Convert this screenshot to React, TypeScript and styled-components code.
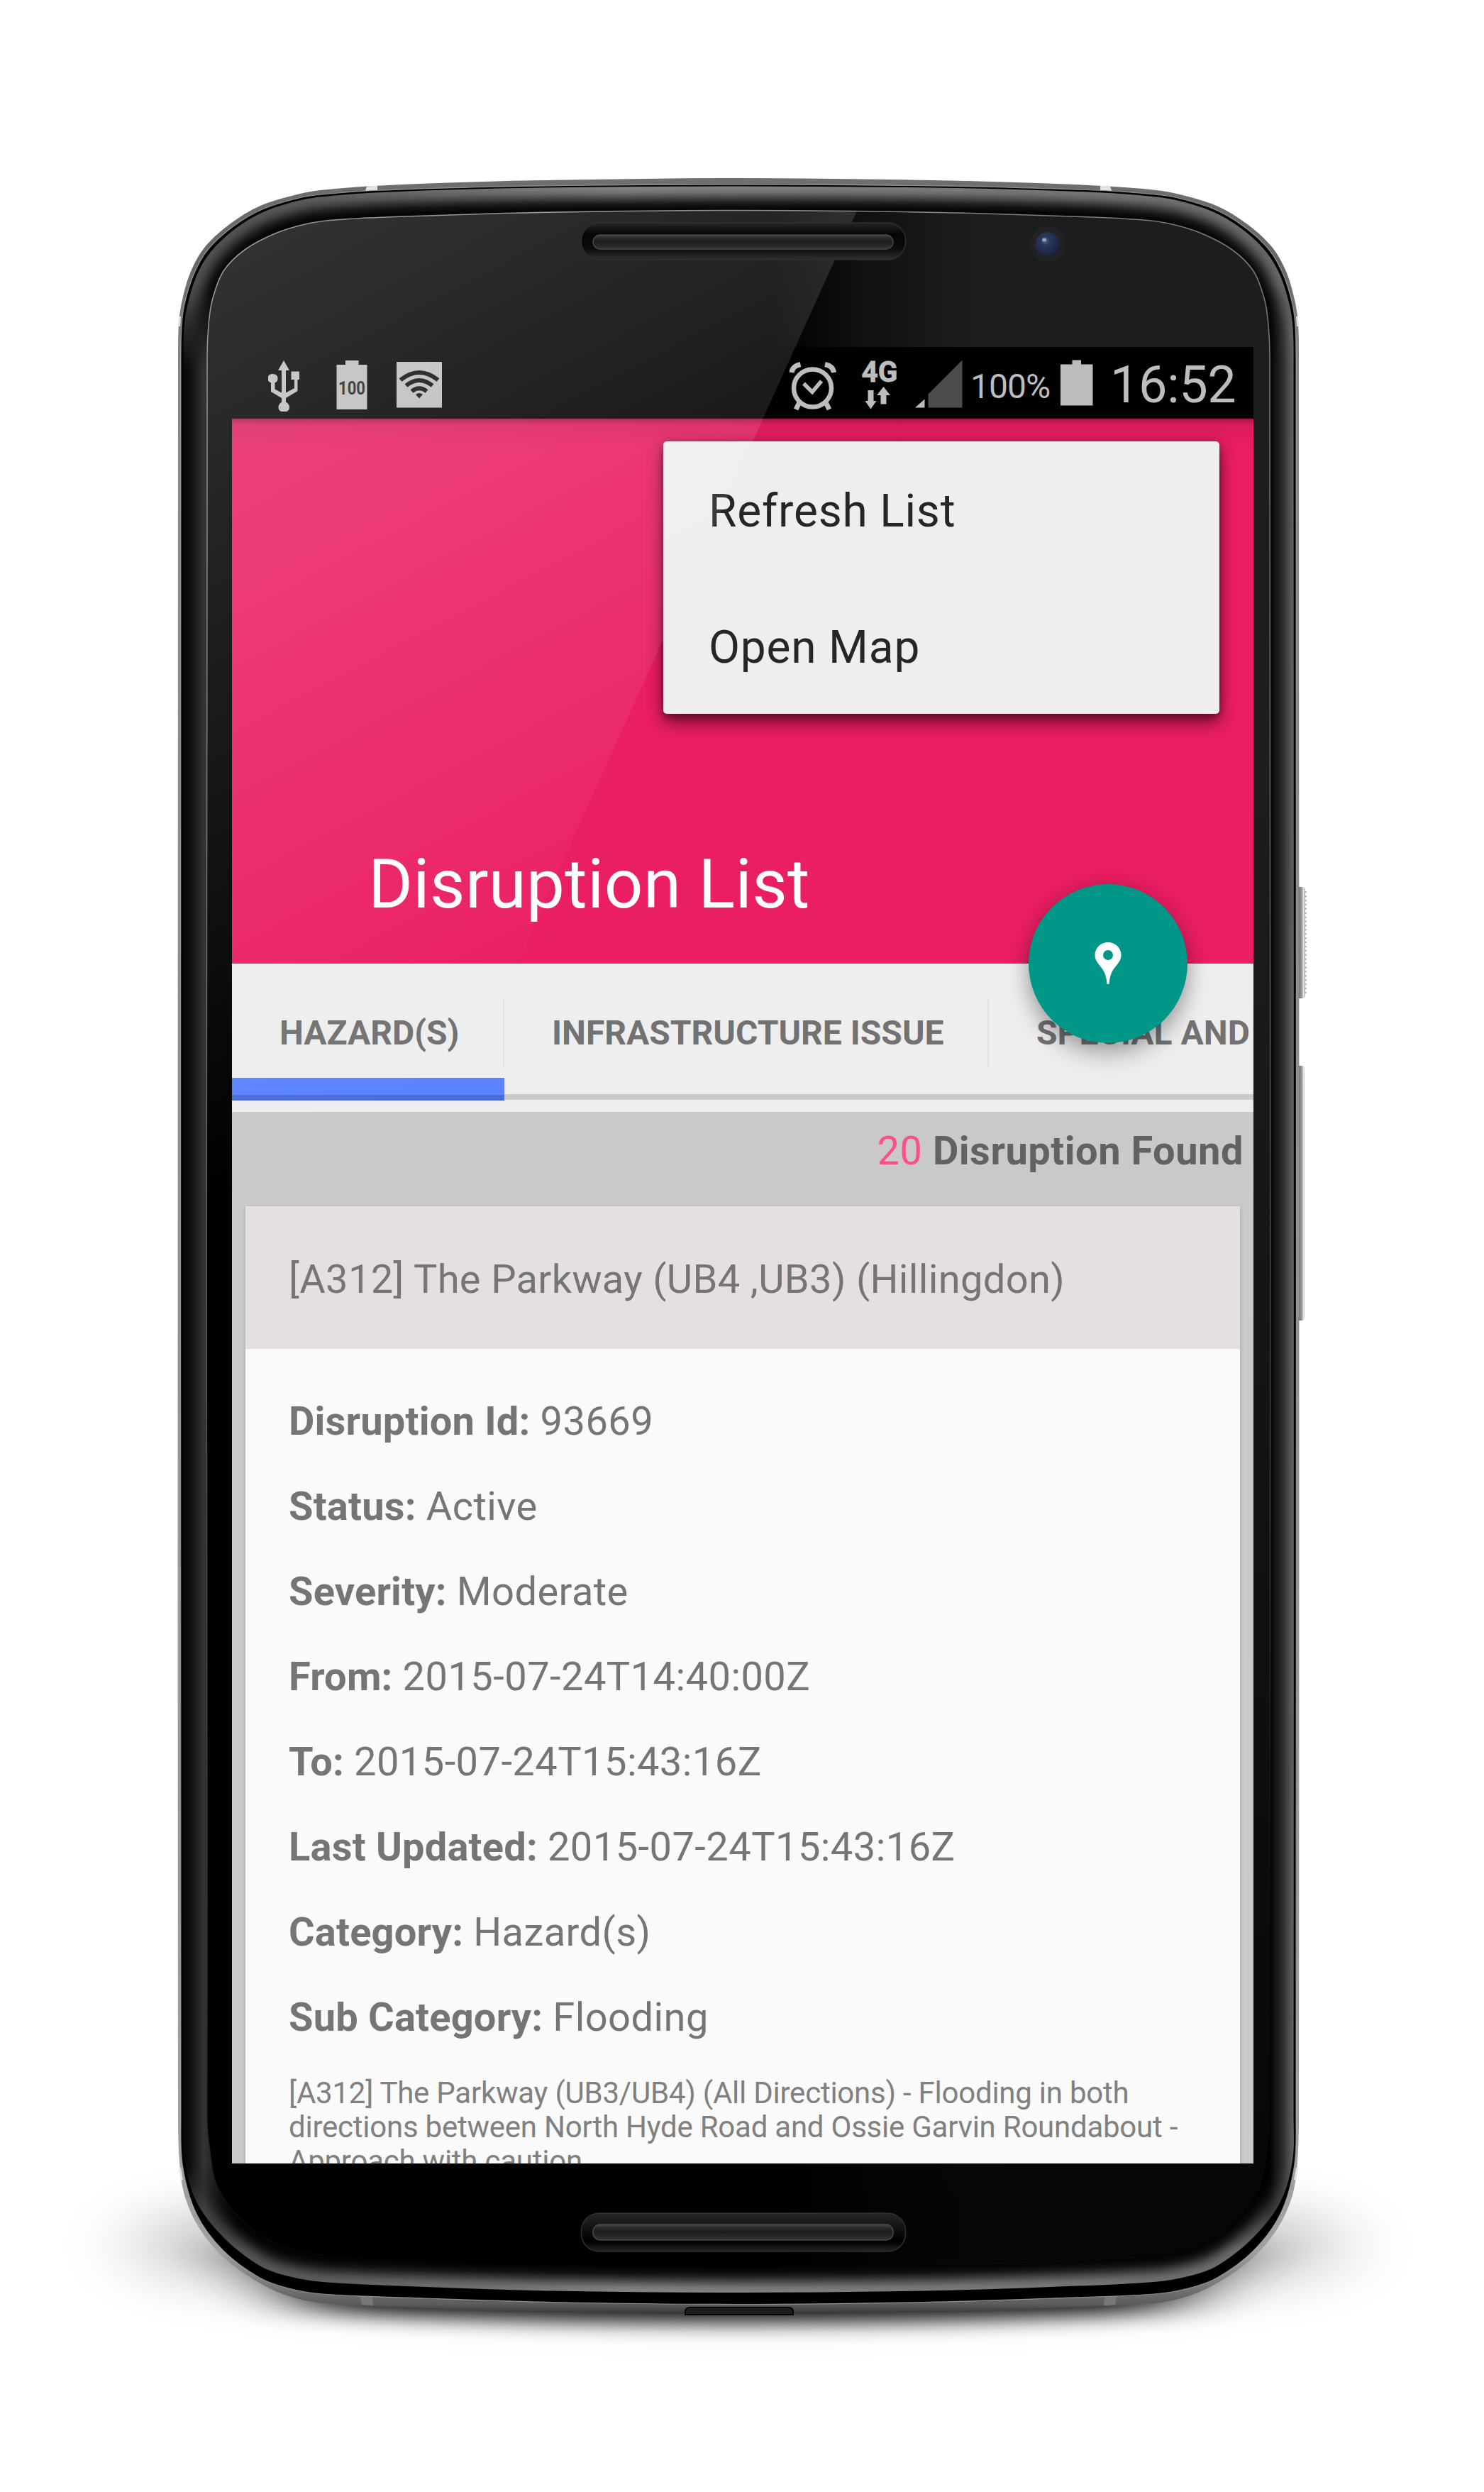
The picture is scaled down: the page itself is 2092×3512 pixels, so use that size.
import React from "react";
import styled, { createGlobalStyle } from "styled-components";

const GlobalStyle = createGlobalStyle`
  html, body { margin: 0; padding: 0; background: #fff; }
  * { box-sizing: border-box; }
`;

/* ---------- device outline geometry ---------- */

type Pt = [number, number];

const AXIS = 1041;

/** Closed smooth outline from the points of its left half, mirrored on the device axis. */
function outline(left: Pt[]): string {
  const right = left
    .slice(1, -1)
    .map(([x, y]): Pt => [AXIS * 2 - x, y])
    .reverse();
  const pts = [...left, ...right];
  const n = pts.length;
  const tangents = pts.map((_, i): Pt => {
    const a = pts[(i + n - 1) % n];
    const b = pts[(i + 1) % n];
    const dx = b[0] - a[0];
    const dy = b[1] - a[1];
    const len = Math.hypot(dx, dy) || 1;
    return [dx / len, dy / len];
  });
  let d = `M${pts[0][0]} ${pts[0][1]}`;
  for (let i = 0; i < n; i++) {
    const j = (i + 1) % n;
    const h = Math.hypot(pts[j][0] - pts[i][0], pts[j][1] - pts[i][1]) / 3;
    d += `C${(pts[i][0] + tangents[i][0] * h).toFixed(1)} ${(pts[i][1] + tangents[i][1] * h).toFixed(1)} ${(
      pts[j][0] -
      tangents[j][0] * h
    ).toFixed(1)} ${(pts[j][1] - tangents[j][1] * h).toFixed(1)} ${pts[j][0]} ${pts[j][1]}`;
  }
  return d + "Z";
}

const BODY = outline([
  [1041, 251], [800, 253.5], [666, 256.5], [528, 262], [452, 268], [421, 273.5], [367, 290], [325, 315], [289, 348],
  [268, 385], [256, 427], [252, 457], [251, 500], [251, 2985], [253.5, 3053], [261, 3097], [282, 3142], [316, 3182],
  [360, 3214], [404, 3235], [455, 3246], [570, 3251.5], [761, 3258], [1041, 3261],
]);

const RIM = outline([
  [1041, 260], [800, 261.5], [666, 264], [528, 268.5], [455, 274], [422, 279], [370, 295], [329, 319], [293, 352],
  [273, 387], [260, 429], [256, 460], [255, 505], [255, 2985], [257.5, 3053], [277, 3120], [315, 3172],
  [366, 3210], [407, 3225], [455, 3233], [600, 3239], [780, 3244.5], [1041, 3247.5],
]);

const BEVEL = outline([
  [1041, 262.5], [800, 264], [666, 266.5], [528, 271.5], [457, 277], [424, 282], [373, 298], [332, 322], [297, 355],
  [277, 389], [264, 431], [259.5, 462], [258.5, 507], [258.5, 2985], [260, 3045], [277, 3103], [315, 3153],
  [366, 3193], [407, 3208], [455, 3216], [600, 3223], [780, 3228.5], [1041, 3231],
]);

const GLASS = outline([
  [1041, 296.5], [880, 297.5], [711, 300.5], [555, 305.5], [470, 310], [430, 316], [388, 329], [345, 352], [315, 382],
  [300, 420], [294.5, 452], [292, 500], [292, 2985], [296, 3030], [305, 3078], [334, 3122], [379, 3157],
  [443, 3177], [596, 3187], [780, 3192], [1041, 3195],
]);

/* ---------- page and screen layout ---------- */

const Page = styled.main`
  position: relative;
  width: 2092px;
  height: 3512px;
  padding: 489px 325px 463px 327px;
  overflow: hidden;
  background: #fff;
  font-family: Roboto, "Noto Sans", sans-serif;
`;

const Overlay = styled.svg`
  position: absolute;
  inset: 0;
  width: 2092px;
  height: 3512px;
  pointer-events: none;
`;

const Screen = styled.div`
  position: relative;
  display: flex;
  flex-direction: column;
  width: 1440px;
  height: 2560px;
  overflow: hidden;
  background: #c9c9c9;
`;

const StatusBar = styled.header`
  display: flex;
  flex: none;
  justify-content: space-between;
  height: 101px;
  padding: 0 26px 0 51px;
  background: #000;
  color: #bdbdbd;
`;

const StatusGroup = styled.div`
  display: flex;
  height: 100%;
`;

const Glyph = styled.svg<{ $gap?: number }>`
  flex: none;
  height: 101px;
  margin-left: ${(p) => p.$gap ?? 0}px;
`;

const StatusText = styled.span<{ $size: number; $width: number; $gap: number; $line: number; $track?: number }>`
  flex: none;
  width: ${(p) => p.$width}px;
  margin-left: ${(p) => p.$gap}px;
  font-size: ${(p) => p.$size}px;
  line-height: ${(p) => p.$line}px;
  letter-spacing: ${(p) => p.$track ?? 0}px;
  white-space: nowrap;
`;

const Hero = styled.section`
  display: flex;
  flex: none;
  align-items: flex-end;
  height: 768px;
  padding: 0 0 56px 192px;
  background: linear-gradient(rgba(0, 0, 0, 0.3), rgba(0, 0, 0, 0.06) 9px, rgba(0, 0, 0, 0.03) 24px, transparent 44px),
    #ea1e62;
`;

const Title = styled.h1`
  margin: 0;
  color: #fff;
  font-size: 96px;
  font-weight: 400;
  line-height: 112px;
  letter-spacing: 0.35px;
  white-space: nowrap;
`;

const TabStrip = styled.nav`
  display: flex;
  flex: none;
  height: 209px;
  padding-bottom: 16px;
  background: linear-gradient(#cbcbcb, #cbcbcb) 0 184px / 100% 8px no-repeat, #eee;
`;

const Tab = styled.button<{ $width: number; $active?: boolean }>`
  flex: none;
  width: ${(p) => p.$width}px;
  height: 193px;
  padding: 2px 0 0 67px;
  border: 0;
  background: ${(p) =>
    p.$active
      ? "linear-gradient(#5b83ff 0 24px, #4c6dd6 24px) 0 161px / 100% 32px no-repeat"
      : "transparent"};
  color: #727272;
  font: 700 48px/191px Roboto, sans-serif;
  letter-spacing: 0;
  text-align: left;
  white-space: nowrap;
`;

const TabDivider = styled.i`
  flex: none;
  width: 2px;
  height: 96px;
  margin: 49px 0 0 -2px;
  background: #e5dfe1;
`;

const Summary = styled.p`
  flex: none;
  height: 133px;
  margin: 0;
  padding: 21px 14px 0 0;
  color: #626262;
  font-size: 56px;
  font-weight: 700;
  line-height: 68px;
  letter-spacing: 0.5px;
  text-align: right;
`;

const Count = styled.span`
  color: #ff4f8b;
  font-weight: 400;
`;

const Card = styled.article`
  flex: none;
  width: 1402px;
  height: 1500px;
  margin-left: 19px;
  background: #fafafa;
  box-shadow: 0 2px 5px rgba(0, 0, 0, 0.22);
  color: #757575;
`;

const CardHeading = styled.h2`
  height: 201px;
  margin: 0;
  padding-left: 61px;
  background: #e5dfe1;
  font-size: 56px;
  font-weight: 400;
  line-height: 207px;
  letter-spacing: 0.35px;
  white-space: nowrap;
`;

const Fields = styled.dl`
  display: flex;
  flex-direction: column;
  margin: 0;
  padding: 42px 0 0 61px;
`;

const Field = styled.div`
  display: flex;
  gap: 14px;
  height: 120px;
  font-size: 56px;
  line-height: 120px;
  white-space: nowrap;
`;

const FieldName = styled.dt`
  font-weight: 700;
  letter-spacing: 0.2px;
`;

const FieldValue = styled.dd`
  margin: 0;
  letter-spacing: 0.45px;
`;

const Comment = styled.p`
  margin: 23px 0 0 61px;
  color: #808080;
  font-size: 42px;
  line-height: 48px;
  letter-spacing: -0.24px;
  white-space: pre;
`;

const Menu = styled.ul`
  position: absolute;
  top: 133px;
  left: 608px;
  width: 784px;
  height: 384px;
  margin: 0;
  padding: 0;
  border-radius: 5px;
  background: #eee;
  box-shadow: 0 14px 22px rgba(0, 0, 0, 0.42), 0 4px 10px rgba(0, 0, 0, 0.3), 0 0 26px rgba(0, 0, 0, 0.18);
  list-style: none;
`;

const MenuItem = styled.li`
  height: 192px;
  padding-left: 64px;
  color: #262626;
  font-size: 64px;
  line-height: 197px;
  letter-spacing: 0.8px;
`;

const Fab = styled.button`
  position: absolute;
  top: 757px;
  left: 1123px;
  width: 224px;
  height: 224px;
  padding: 0;
  border: 0;
  border-radius: 50%;
  background: #009688;
  box-shadow: 0 18px 32px rgba(0, 0, 0, 0.26), 0 0 26px rgba(0, 0, 0, 0.16);

  svg {
    display: block;
  }
`;

/* ---------- device artwork ---------- */

function Grille({ top }: { top?: boolean }) {
  const y = top ? 314 : 3119;
  return (
    <g>
      <rect x="819.5" y={y} width="457" height={top ? 52 : 54} rx="25" fill={top ? "url(#slotTop)" : "url(#slotBottom)"} stroke="#2f2f2f" strokeWidth="1.5" />
      <rect x="836" y={y + (top ? 17 : 16)} width="423" height={top ? 20 : 22} rx="10" fill="url(#bar)" stroke="#484848" strokeWidth="1.5" />
    </g>
  );
}

function Device() {
  return (
    <Overlay viewBox="0 0 2092 3512" aria-hidden="true">
      <defs>
        <linearGradient id="rimFill" x1="0" y1="251" x2="0" y2="3262" gradientUnits="userSpaceOnUse">
          <stop offset="0" stopColor="#6f6f6f" />
          <stop offset="0.04" stopColor="#666" />
          <stop offset="0.08" stopColor="#858585" />
          <stop offset="0.97" stopColor="#a0a0a0" />
          <stop offset="0.985" stopColor="#7c7c7c" />
          <stop offset="0.995" stopColor="#5c5c5c" />
          <stop offset="1" stopColor="#333" />
        </linearGradient>
        <linearGradient id="bevelSide" x1="258" y1="0" x2="1824" y2="0" gradientUnits="userSpaceOnUse">
          <stop offset="0" stopColor="#060606" />
          <stop offset="0.006" stopColor="#0e0e0e" />
          <stop offset="0.019" stopColor="#333" />
          <stop offset="0.05" stopColor="#000" />
          <stop offset="0.978" stopColor="#000" />
          <stop offset="0.99" stopColor="#2c2c2b" />
          <stop offset="1" stopColor="#676766" />
        </linearGradient>
        <linearGradient id="edgeLight" x1="258" y1="0" x2="1824" y2="0" gradientUnits="userSpaceOnUse">
          <stop offset="0" stopColor="#505050" />
          <stop offset="0.4" stopColor="#8a8a8a" />
          <stop offset="0.8" stopColor="#7c7c7a" />
          <stop offset="1" stopColor="#6a6a69" />
        </linearGradient>
        <linearGradient id="capFade" x1="0" y1="251" x2="0" y2="3262" gradientUnits="userSpaceOnUse">
          <stop offset="0" stopColor="#fff" />
          <stop offset="0.05" stopColor="#fff" />
          <stop offset="0.09" stopColor="#000" />
          <stop offset="0.93" stopColor="#000" />
          <stop offset="0.97" stopColor="#fff" />
        </linearGradient>
        <linearGradient id="glassFill" x1="1090" y1="0" x2="1420" y2="0" gradientUnits="userSpaceOnUse">
          <stop offset="0" stopColor="#000" />
          <stop offset="0.4" stopColor="#111" />
          <stop offset="0.85" stopColor="#1d1d1d" />
          <stop offset="1" stopColor="#1c1e1d" />
        </linearGradient>
        <linearGradient id="glassFade" x1="0" y1="1100" x2="0" y2="3100" gradientUnits="userSpaceOnUse">
          <stop offset="0" stopColor="#000" stopOpacity="0" />
          <stop offset="1" stopColor="#000" stopOpacity="0.8" />
        </linearGradient>
        <linearGradient id="glassLine" x1="292" y1="300" x2="1400" y2="3200" gradientUnits="userSpaceOnUse">
          <stop offset="0" stopColor="#8c8c8c" />
          <stop offset="0.5" stopColor="#555" />
          <stop offset="0.75" stopColor="#333" />
          <stop offset="0.95" stopColor="#000" stopOpacity="0" />
        </linearGradient>
        <linearGradient id="slotTop" x1="0" y1="0" x2="0" y2="1">
          <stop offset="0" stopColor="#262626" />
          <stop offset="0.3" stopColor="#050505" />
          <stop offset="0.7" stopColor="#0c0c0c" />
          <stop offset="1" stopColor="#303030" />
        </linearGradient>
        <linearGradient id="slotBottom" x1="0" y1="0" x2="0" y2="1">
          <stop offset="0" stopColor="#262626" />
          <stop offset="0.3" stopColor="#161616" />
          <stop offset="0.75" stopColor="#000" />
          <stop offset="1" stopColor="#262626" />
        </linearGradient>
        <linearGradient id="bar" x1="0" y1="0" x2="0" y2="1">
          <stop offset="0" stopColor="#4a4a4a" />
          <stop offset="0.2" stopColor="#2b2b2b" />
          <stop offset="0.5" stopColor="#1d1d1d" />
          <stop offset="1" stopColor="#343434" />
        </linearGradient>
        <linearGradient id="key" x1="1831" y1="0" x2="1840" y2="0" gradientUnits="userSpaceOnUse">
          <stop offset="0" stopColor="#707070" />
          <stop offset="0.55" stopColor="#a5a5a5" />
          <stop offset="0.7" stopColor="#eee" />
          <stop offset="1" stopColor="#aaa" />
        </linearGradient>
        <mask id="caps">
          <rect width="2092" height="3512" fill="url(#capFade)" />
        </mask>
        <clipPath id="bevelClip">
          <path d={BEVEL} />
        </clipPath>
        <filter id="groundBlur" x="-30%" y="-100%" width="160%" height="300%">
          <feGaussianBlur stdDeviation="62 14" />
        </filter>
        <filter id="sideBlur" x="-30%" y="-100%" width="160%" height="300%">
          <feGaussianBlur stdDeviation="55 38" />
        </filter>
        <filter id="edgeBlur" x="-5%" y="-5%" width="110%" height="110%">
          <feGaussianBlur stdDeviation="9" />
        </filter>
      </defs>

      <ellipse cx="1041" cy="3165" rx="860" ry="84" fill="#000" opacity="0.26" filter="url(#sideBlur)" />
      <path d="M350 3166H1732L1640 3258Q1041 3288 442 3258Z" fill="#000" opacity="0.9" filter="url(#groundBlur)" />

      <rect x="1828" y="1250" width="12" height="157" rx="4" fill="url(#key)" />
      <path d="M1840 1256V1402" stroke="#bbb" strokeWidth="4" strokeDasharray="2.5 3.4" />
      <rect x="1828" y="1502" width="11" height="359" rx="4" fill="url(#key)" />

      <path d={BODY} fill="url(#rimFill)" />
      <g fill="#e2e2e2">
        <path d="M517 262.500l15-1v6.500l-17 1z" />
        <path d="M1565 262.500l-14-1v6.500l16 1z" />
        <path d="M251 460l1-14h3l-1 14zM1831 460l-1-14h-3l1 14z" />
        <path d="M252 3055h3l3 17h-3zM1830 3055h-3l-3 17h3z" />
      </g>
      <path d="M508 3236l17 1 1 12-16-1zM1574 3236l-17 1-1 12 16-1z" fill="#777" />
      <path d={RIM} fill="#000" stroke="#b4b4b4" strokeOpacity="0.7" strokeWidth="1.2" />
      <path d="M966 3262v-4q0-6 7-6h138q7 0 7 6v4z" fill="#1c1c1c" stroke="#000" strokeWidth="2" />

      <path d={BEVEL} fill="url(#bevelSide)" />
      <g clipPath="url(#bevelClip)" mask="url(#caps)">
        <path d={BEVEL} fill="#030303" />
        <path d={BEVEL} fill="none" stroke="url(#edgeLight)" strokeWidth="32" filter="url(#edgeBlur)" />
      </g>

      <path d={GLASS} fill="url(#glassFill)" />
      <path d={GLASS} fill="url(#glassFade)" />
      <path d={GLASS} fill="none" stroke="url(#glassLine)" strokeWidth="1.6" />
    </Overlay>
  );
}

function Reflection() {
  return (
    <Overlay viewBox="0 0 2092 3512" aria-hidden="true">
      <defs>
        <linearGradient id="glare" x1="300" y1="300" x2="877" y2="1400" gradientUnits="userSpaceOnUse">
          <stop offset="0" stopColor="#fff" stopOpacity="0.205" />
          <stop offset="1" stopColor="#fff" stopOpacity="0" />
        </linearGradient>
        <clipPath id="glassClip">
          <path d={GLASS} />
        </clipPath>
        <radialGradient id="lens" cx="0.4" cy="0.35" r="0.7">
          <stop offset="0" stopColor="#56658f" />
          <stop offset="0.25" stopColor="#2a385c" />
          <stop offset="0.7" stopColor="#1f2a48" />
          <stop offset="1" stopColor="#1b1f2a" />
        </radialGradient>
      </defs>
      <path d="M240 240H1234L795 1210L560 1750H240Z" fill="url(#glare)" clipPath="url(#glassClip)" />
      <Grille top />
      <Grille />
      <circle cx="1477" cy="344" r="25" fill="#222" />
      <circle cx="1477" cy="344.500" r="17.500" fill="url(#lens)" />
      <ellipse cx="1472" cy="338" rx="3" ry="2.500" fill="#9aa3bb" />
    </Overlay>
  );
}

/* ---------- status bar ---------- */

function Status() {
  return (
    <StatusBar>
      <StatusGroup>
        <Glyph viewBox="378 489 44 101" width="44" fill="#bdbdbd">
          <path d="M400 508l8 14h-5v31.500l12-6.500V535h-4.500v-11.500h12V535h-3v16L403 561v5.500q5 3 5 7.500t-4 6h-7.500q-4-1.500-4-6t4.500-7.500V561L382 552v-12.500q-4.500-1.500-4.500-6 0-6.500 7-6.500t7 6.500q0 4.500-4 6v9l9.500 5V522H392z" />
        </Glyph>
        <Glyph viewBox="474 489 44 101" width="44" $gap={52}>
          <path d="M474.500 514h12.500v-6h18.500v6h12v63h-43z" fill="#bdbdbd" />
          <text x="496" y="555.500" textAnchor="middle" textLength="38" lengthAdjust="spacingAndGlyphs" fontFamily="Roboto, sans-serif" fontSize="26" fontWeight="700" fill="#222">
            100
          </text>
        </Glyph>
        <Glyph viewBox="559 489 64 101" width="64" $gap={41}>
          <path d="M559 510h64v64.500h-64z" fill="#bdbdbd" />
          <g fill="none" stroke="#0d0d0d" strokeWidth="6">
            <path d="M564.500 535.500Q591 514.500 617.500 535.500" />
            <path d="M572.500 543.500Q591 528.500 609.500 543.500" />
            <path d="M580.500 551.500Q591 543 601.500 551.500" />
          </g>
          <path d="M586 556q5-4 10 0l-5 5.500z" fill="#0d0d0d" />
        </Glyph>
      </StatusGroup>

      <StatusGroup>
        <Glyph viewBox="1112 489 68 101" width="68">
          <g fill="none" stroke="#bdbdbd">
            <circle cx="1145.500" cy="547" r="26.500" strokeWidth="6.500" />
            <path d="M1133 540.500l12 12 13-15.500" strokeWidth="5.500" />
            <path d="M1116 525q1-9 12.500-11.500M1175.500 525q-1-9-12.500-11.500" strokeWidth="7" />
            <path d="M1127 567l-5 10M1164 567l5 10" strokeWidth="7" />
          </g>
        </Glyph>
        <Glyph viewBox="1212 489 56 101" width="56" $gap={32} fill="#bdbdbd">
          <text x="1214.500" y="538" textLength="51" lengthAdjust="spacingAndGlyphs" fontFamily="Roboto, sans-serif" fontSize="40" fontWeight="700" stroke="#bdbdbd" strokeWidth="0.8">
            4G
          </text>
          <path d="M1223.500 550h8v15h4l-8 11.500-8-11.500h4zM1241.500 569.500h8V557h5.500l-9.500-12-9.500 12h5.500z" />
        </Glyph>
        <Glyph viewBox="1290 489 67 101" width="67" $gap={22}>
          <path d="M1290 574.500l13.500-12v12z" fill="#bdbdbd" />
          <path d="M1308.500 574.500V555.500L1356.500 507.500V574.500z" fill="#4c4c4c" />
        </Glyph>
        <StatusText $size={48} $width={118} $gap={11} $line={111} $track={-1}>
          100%
        </StatusText>
        <Glyph viewBox="1494 489 48 101" width="48" $gap={8}>
          <path d="M1495 513.500h16.500V507.500h12.500v6h16.500v58H1495z" fill="#bdbdbd" />
        </Glyph>
        <StatusText $size={72} $width={176} $gap={23} $line={107} $track={-0.4}>
          16:52
        </StatusText>
      </StatusGroup>
    </StatusBar>
  );
}

/* ---------- content ---------- */

const FIELDS: [string, string][] = [
  ["Disruption Id:", "93669"],
  ["Status:", "Active"],
  ["Severity:", "Moderate"],
  ["From:", "2015-07-24T14:40:00Z"],
  ["To:", "2015-07-24T15:43:16Z"],
  ["Last Updated:", "2015-07-24T15:43:16Z"],
  ["Category:", "Hazard(s)"],
  ["Sub Category:", "Flooding"],
];

const COMMENT = `[A312] The Parkway (UB3/UB4) (All Directions) - Flooding in both
directions between North Hyde Road and Ossie Garvin Roundabout -
Approach with caution.`;

export default function App() {
  return (
    <>
      <GlobalStyle />
      <Page>
        <Device />
        <Screen>
          <Status />
          <Hero>
            <Title>Disruption List</Title>
          </Hero>
          <TabStrip>
            <Tab $width={384} $active>
              HAZARD(S)
            </Tab>
            <TabDivider />
            <Tab $width={683}>INFRASTRUCTURE ISSUE</Tab>
            <TabDivider />
            <Tab $width={373}>SPECIAL AND</Tab>
          </TabStrip>
          <Summary>
            <Count>20</Count> Disruption Found
          </Summary>
          <Card>
            <CardHeading>[A312] The Parkway (UB4 ,UB3) (Hillingdon)</CardHeading>
            <Fields>
              {FIELDS.map(([name, value]) => (
                <Field key={name}>
                  <FieldName>{name}</FieldName>
                  <FieldValue>{value}</FieldValue>
                </Field>
              ))}
            </Fields>
            <Comment>{COMMENT}</Comment>
          </Card>
          <Menu>
            <MenuItem>Refresh List</MenuItem>
            <MenuItem>Open Map</MenuItem>
          </Menu>
          <Fab aria-label="Show on map">
            <svg width="224" height="224" viewBox="1450 1246 224 224" fill="#fff" fillRule="evenodd">
              <path d="M1562 1328c10.500 0 18.500 8 18.500 18 0 9-7 14-11.500 21-3.500 6-5 12-5.500 20h-3c-.5-8-2-14-5.500-20-4.500-7-11.500-12-11.500-21 0-10 8-18 18.500-18zm0 11a7 7 0 1 0 0 14 7 7 0 0 0 0-14z" />
            </svg>
          </Fab>
        </Screen>
        <Reflection />
      </Page>
    </>
  );
}
